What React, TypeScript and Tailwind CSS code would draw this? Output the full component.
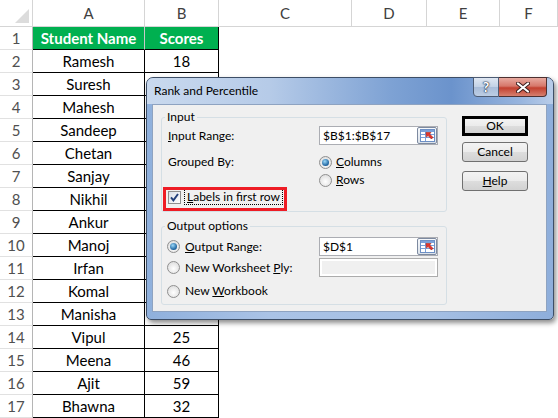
import React from "react";

const names = ["Ramesh","Suresh","Mahesh","Sandeep","Chetan","Sanjay","Nikhil","Ankur","Manoj","Irfan","Komal","Manisha","Vipul","Meena","Ajit","Bhawna"];
const scores = [18, 40, 55, 62, 37, 71, 48, 29, 66, 53, 44, 38, 25, 46, 59, 32];
const letters = ["A", "B", "C", "D", "E", "F"];

function Sheet() {
  return (
    <div className="grid grid-cols-[33px_112px_74px_133px_75px_73px_1fr] font-['Lato',sans-serif] text-[15px] text-black">
      <div className="h-[27px] border-b border-r border-[#d5d5d5] flex items-end justify-end pr-[3px] pb-[3px]">
        <svg width="14" height="14" viewBox="0 0 14 14"><polygon points="14,0 14,14 0,14" fill="#dcdcdc" /></svg>
      </div>
      {letters.map((l) => (
        <div key={l} className="h-[27px] border-b border-r border-[#d5d5d5] flex items-center justify-center text-[#404040]">{l}</div>
      ))}

      <div className="h-[23px] border-b border-[#e1e1e1] border-r border-r-[#b5b5b5] flex items-center justify-center text-[#505050]">1</div>
      <div className="h-[23px] border-b border-black border-r border-r-[#c8c8c8] bg-[#00b050] text-white font-bold flex items-center justify-center">Student Name</div>
      <div className="h-[23px] border-b border-black border-r bg-[#00b050] text-white font-bold flex items-center justify-center">Scores</div>
      <div className="h-[23px]" /><div className="h-[23px]" /><div className="h-[23px]" /><div className="h-[23px]" />

      {names.map((n, i) => (
        <React.Fragment key={n}>
          <div className="h-[23px] border-b border-[#e1e1e1] border-r border-r-[#b5b5b5] flex items-center justify-center text-[#505050]">{i + 2}</div>
          <div className="h-[23px] border-b border-r border-black flex items-center justify-center">{n}</div>
          <div className="h-[23px] border-b border-r border-black flex items-center justify-center">{scores[i]}</div>
          <div className="h-[23px]" /><div className="h-[23px]" /><div className="h-[23px]" /><div className="h-[23px]" />
        </React.Fragment>
      ))}
    </div>
  );
}

function RefIcon() {
  return (
    <svg width="15" height="13" viewBox="0 0 15 13">
      <rect x="0.5" y="0.5" width="14" height="12" fill="#ffffff" stroke="#6d8fc4" />
      <rect x="1" y="1" width="13" height="2" fill="#7aa0d8" />
      <line x1="1" y1="5.5" x2="14" y2="5.5" stroke="#7aa0d8" />
      <line x1="1" y1="8.5" x2="14" y2="8.5" stroke="#7aa0d8" />
      <line x1="5.5" y1="1" x2="5.5" y2="12" stroke="#7aa0d8" />
      <path d="M6 3.5 L11 3.5 L9.6 5 L13 8.4 L11.4 10 L8 6.6 L6.5 8 Z" fill="#e3342b" stroke="#a11a12" strokeWidth="0.6" />
    </svg>
  );
}

function RefBox({ value }: { value: string }) {
  return (
    <div className="w-[119px] h-[19px] border border-[#abadb3] bg-white flex items-center">
      <span className="pl-[3px] flex-1 leading-none">{value}</span>
      <span className="w-[20px] h-[17px] border border-[#7d8aa0] rounded-[2px] bg-gradient-to-b from-[#f6f8fb] to-[#dbe2ea] flex items-center justify-center">
        <RefIcon />
      </span>
    </div>
  );
}

function Radio({ checked }: { checked?: boolean }) {
  return (
    <span className="w-[13px] h-[13px] rounded-full border border-[#8f8f8f] bg-[radial-gradient(circle_at_50%_60%,#ffffff,#d6d6d6)] flex items-center justify-center shrink-0">
      {checked && <span className="w-[7px] h-[7px] rounded-full bg-[radial-gradient(circle_at_40%_35%,#9bd8f8,#2368a3_65%,#123f66)]" />}
    </span>
  );
}

function Checkbox() {
  return (
    <span className="w-[13px] h-[13px] border border-[#8f8f8f] bg-gradient-to-br from-[#d9dfe8] to-white flex items-center justify-center shrink-0">
      <svg width="9" height="9" viewBox="0 0 9 9"><path d="M1 4.3 L3.4 7.4 L8 1" stroke="#213f7a" strokeWidth="1.9" fill="none" /></svg>
    </span>
  );
}

function Btn({ children, def }: { children: React.ReactNode; def?: boolean }) {
  return (
    <div className={def
      ? "w-[66px] h-[20px] border-[3px] border-black bg-[linear-gradient(#f3f3f3_0%,#ebebeb_50%,#dddddd_51%,#d2d2d2_100%)] flex items-center justify-center"
      : "w-[66px] h-[20px] border border-[#707070] rounded-[3px] bg-[linear-gradient(#f3f3f3_0%,#ebebeb_50%,#dddddd_51%,#d2d2d2_100%)] flex items-center justify-center"}>
      {children}
    </div>
  );
}

function Dialog() {
  return (
    <div className="absolute left-[146px] top-[77px] w-[408px] h-[243px] rounded-t-[7px] rounded-b-[5px] border border-[#3d4e66] bg-[linear-gradient(90deg,#8fb0dc,#aac3e6_30%,#a5bfe3_70%,#8eaedb)] shadow-[2px_3px_5px_rgba(0,0,0,0.45)] flex flex-col font-['Lato',sans-serif] text-[12px] text-black">
      <div className="h-[26px] flex items-start rounded-t-[6px] bg-[linear-gradient(90deg,#c9d9ee_0%,#b6cbe8_30%,#7ea2d4_60%,#6b93cc_75%,#98b5de_92%,#b9cde9_100%)]">
        <div className="pl-[7px] pt-[7px] flex-1 leading-none">Rank and Percentile</div>
        <div className="flex mr-[6px] -mt-px">
          <div className="w-[26px] h-[20px] border border-[#4d5c74] rounded-bl-[4px] bg-[linear-gradient(#dfe7f2_0%,#c3d2e6_48%,#a9bdd9_52%,#bccde4_100%)] flex items-center justify-center">
            <span className="text-white font-bold text-[14px] leading-none [text-shadow:0_0_1px_#1e2c44,0_0_1px_#1e2c44,0_0_2px_#1e2c44]">?</span>
          </div>
          <div className="w-[48px] h-[20px] border border-l-0 border-[#4d3030] rounded-br-[4px] bg-[linear-gradient(#e8aaa0_0%,#d6776a_45%,#c2402f_55%,#d6806f_100%)] flex items-center justify-center">
            <svg width="14" height="11" viewBox="0 0 14 11">
              <path d="M2 1.5 L12 9.5 M12 1.5 L2 9.5" stroke="#3a1c1c" strokeWidth="4" strokeLinecap="round" />
              <path d="M2 1.5 L12 9.5 M12 1.5 L2 9.5" stroke="#ffffff" strokeWidth="2.2" strokeLinecap="round" />
            </svg>
          </div>
        </div>
      </div>
      <div className="ml-[5px] mr-[6px] mb-[7px] flex-1 border border-[#8ea3c1] bg-[#f0f0f0] flex pt-[5px] pl-[8px]">
        <div className="w-[286px] flex flex-col">
          <fieldset className="h-[102px] border border-[#d5dfe5] rounded-[3px]">
            <legend className="ml-[3px] px-[2px] leading-[14px]">Input</legend>
            <div className="pl-[6px] flex flex-col">
              <div className="flex items-center h-[19px] mt-[2px]">
                <span className="w-[151px]"><span className="underline">I</span>nput Range:</span>
                <RefBox value="$B$1:$B$17" />
              </div>
              <div className="flex items-center h-[18px] mt-[8px]">
                <span className="w-[151px]">Grouped By:</span>
                <Radio checked />
                <span className="ml-[4px]"><span className="underline">C</span>olumns</span>
              </div>
              <div className="flex items-center h-[18px]">
                <span className="w-[151px]" />
                <Radio />
                <span className="ml-[4px]"><span className="underline">R</span>ows</span>
              </div>
              <div className="flex items-center h-[18px] -mt-px">
                <Checkbox />
                <span className="ml-[3px] border border-dotted border-black px-[2px] leading-[14px]"><span className="underline">L</span>abels in first row</span>
              </div>
            </div>
          </fieldset>
          <fieldset className="h-[86px] mt-[7px] border border-[#d5dfe5] rounded-[3px]">
            <legend className="ml-[3px] px-[2px] leading-[14px]">Output options</legend>
            <div className="pl-[5px] flex flex-col">
              <div className="flex items-center h-[19px] mt-[4px]">
                <span className="w-[152px] flex items-center"><Radio checked /><span className="ml-[5px]"><span className="underline">O</span>utput Range:</span></span>
                <RefBox value="$D$1" />
              </div>
              <div className="flex items-center h-[19px] mt-[2px]">
                <span className="w-[152px] flex items-center"><Radio /><span className="ml-[5px]">New Worksheet <span className="underline">P</span>ly:</span></span>
                <div className="w-[119px] h-[19px] border border-[#acacac] bg-white p-[2px]"><div className="w-full h-full bg-[#f0f0f0]" /></div>
              </div>
              <div className="flex items-center h-[18px] mt-[5px]">
                <Radio />
                <span className="ml-[5px]">New <span className="underline">W</span>orkbook</span>
              </div>
            </div>
          </fieldset>
        </div>
        <div className="ml-[15px] mt-[6px] flex flex-col">
          <Btn def>OK</Btn>
          <div className="mt-[6px]"><Btn>Cancel</Btn></div>
          <div className="mt-[9px]"><Btn><span><span className="underline">H</span>elp</span></Btn></div>
        </div>
      </div>
    </div>
  );
}

export default function App() {
  return (
    <div className="relative w-[558px] h-[418px] overflow-hidden bg-white">
      <Sheet />
      <Dialog />
      <div className="absolute left-[163px] top-[187px] w-[124px] h-[24px] border-[3px] border-[#ee1c25]" />
    </div>
  );
}
